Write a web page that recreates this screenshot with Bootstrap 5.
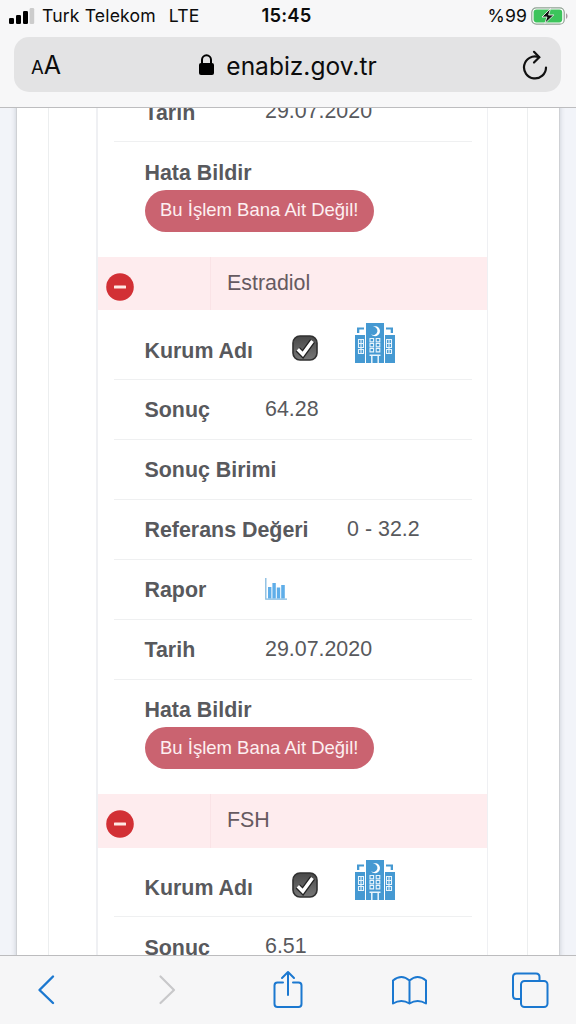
<!DOCTYPE html>
<html lang="tr">

<head>
    <meta charset="UTF-8">
    <meta name="viewport" content="width=device-width, initial-scale=1.0">
    <title>e-Nabız Tahliller</title>
    <link href="https://cdn.jsdelivr.net/npm/bootstrap@5.3.3/dist/css/bootstrap.min.css" rel="stylesheet">
    <style>
        body {
            font-family: "Liberation Sans", Arial, sans-serif;
            font-size: 21.4px;
            color: #58595d;
            background: #f2f4f9;
        }
        svg { display: block; flex: none; }

        /* browser bars */
        .top-bar {
            height: 108px;
            background: #f7f7f8;
            border-bottom: 1px solid #bdbdbf;
            font-family: Inter, Roboto, sans-serif;
            color: #0c0c0c;
        }
        .status-line {
            display: grid;
            grid-template-columns: 1fr auto 1fr;
            height: 37px;
            padding: 0 8px 5px 9px;
            font-size: 17.6px;
            letter-spacing: .15px;
        }
        .carrier { margin-left: 7px; }
        .network { margin-left: 13px; }
        .clock { padding-right: 4px; font-weight: 600; font-size: 18.4px; letter-spacing: .2px; }
        .address {
            height: 55px;
            margin: 0 15px 0 14px;
            padding: 0 13px 0 17px;
            border-radius: 15px;
            background: #e3e3e4;
            font-size: 24.5px;
        }
        .url-box { padding-right: 7px; }
        .text-size { font-size: 18.5px; line-height: 1; padding-top: 2px; }
        .text-size span { font-size: 25px; }
        .bottom-bar {
            height: 69px;
            background: #f6f6f7;
            border-top: 1px solid #bcbcbe;
            color: #1b78d0;
        }

        /* page frames */
        .sheet {
            margin: 0 16px;
            padding: 0 31px;
            background: #fff;
            border: solid #cfd1d5;
            border-width: 0 1px;
            box-shadow: 0 0 5px rgba(60, 70, 90, .22);
        }
        .panel-frame {
            padding: 0 39px 0 47px;
            border: solid #eceeef;
            border-width: 0 1px;
        }
        .results {
            margin-top: -26px;
            border: solid #eff0f3;
            border-width: 0 1px 0 2px;
        }

        /* lab result rows */
        .test-head { height: 53.5px; background: #feecee; color: #665a60; }
        .toggle-cell {
            width: 113px;
            padding: 16px 0 0 8px;
            border-right: 1px solid #fae3e6;
        }
        .test-name { padding: 10px 0 0 16px; }
        .detail {
            height: 60px;
            margin: 0 15px 0 16px;
            padding: 14.6px 0 0 30.5px;
            border-bottom: 1.5px solid #eff0f1;
            line-height: 32px;
        }
        .detail.first-row { height: 69.5px; padding-top: 24.5px; }
        .detail.last-row { height: 114.5px; border: 0; }
        .detail-label { min-width: 82px; margin-right: 38.5px; font-weight: 700; }
        .detail-value { margin-top: -1.4px; }
        .last-row .detail-label { line-height: 30px; padding-top: 1px; }
        .first-row .hospital { margin: -13px 0 0 36px; }
        .report-btn {
            height: 42px;
            width: 229.5px;
            padding: 0 0 1px;
            margin-top: 2px;
            border: 0;
            border-radius: 21px;
            background: #ca6370;
            color: #fdeff0;
            font-size: 18.5px;
            white-space: nowrap;
        }
    </style>
</head>

<body>
    <svg width="0" height="0" class="position-absolute">
        <symbol id="minus" viewBox="0 0 28 28">
            <circle cx="14" cy="14" r="13.8" fill="#d23035" />
            <rect x="8" y="12.5" width="12" height="3" rx=".6" fill="#ffe9e5" />
        </symbol>
        <symbol id="check" viewBox="0 0 26 26">
            <rect x="1" y="1" width="24" height="24" rx="7" fill="url(#dark)" stroke="#303030" stroke-width="1.6" />
            <path d="M5.8 14.3l5 5L20.5 6" fill="none" stroke="#222" stroke-width="6" />
            <path d="M5.8 14.3l5 5L20.5 6" fill="none" stroke="#fff" stroke-width="3.4" />
        </symbol>
        <linearGradient id="dark" x2="0" y2="1">
            <stop stop-color="#484848" />
            <stop offset="1" stop-color="#777" />
        </linearGradient>
        <symbol id="hospital" viewBox="0 0 42 42">
            <g fill="#4599d2">
                <path d="M12 1h18v40H12zM1 13h10v28H1zM31 13h10v28H31z" />
                <path d="M3 5.5h7v2H5.3V11H3zM32 5.5h7V11h-2.3V7.5H32z" />
            </g>
            <path d="M18.6 4.8A5 5 0 1 1 17 12.2a4.1 4.1 0 1 0 1.6-7.4z" fill="#fff" />
            <g fill="none" stroke="#e8f4fc" stroke-width="1.1">
                <path d="M16 16.5h3.6v3.4H16zM22.2 16.5h3.6v3.4h-3.6zM16 21.5h3.6v3.4H16zM22.2 21.5h3.6v3.4h-3.6zM16 26.5h3.6v3.4H16zM22.2 26.5h3.6v3.4h-3.6z" />
                <path d="M4.5 17.5h5v4h-5zM4.5 21.5h5v4h-5zM4.5 27.5h5v4h-5zM7 17.5v14M32.5 17.5h5v4h-5zM32.5 21.5h5v4h-5zM32.5 27.5h5v4h-5zM35 17.5v14" />
                <path d="M15.5 33.3h11M17.8 33.5V41M24.2 33.5V41" stroke-width="1.5" />
            </g>
        </symbol>
        <symbol id="chart" viewBox="0 0 22 22">
            <path d="M.8 0v21.2H22" fill="none" stroke="#83b9df" stroke-width="1.3" />
            <path d="M3 9h3.4v11.5H3zM7.4 5h3.4v15.5H7.4zM11.8 9.5h3.4v11H11.8zM16.2 7h3.6v13.5h-3.6z" fill="#5faee9" />
        </symbol>
    </svg>

    <div class="vh-100 d-flex flex-column overflow-hidden">
        <header class="top-bar flex-shrink-0">
            <div class="status-line align-items-center">
                <div class="d-flex align-items-center">
                    <svg width="26" height="16" viewBox="0 0 26 16">
                        <rect x="0" y="10" width="5" height="6" rx="1.3" />
                        <rect x="7" y="7" width="5" height="9" rx="1.3" />
                        <rect x="14" y="3" width="5" height="13" rx="1.3" />
                        <rect x="20.6" y="0" width="4.6" height="16" rx="1.3" fill="#ccc" />
                    </svg>
                    <span class="carrier">Turk Telekom</span>
                    <span class="network">LTE</span>
                </div>
                <div class="clock">15:45</div>
                <div class="d-flex align-items-center justify-content-end gap-1">
                    <span>%99</span>
                    <svg width="37" height="18" viewBox="0 0 37 18">
                        <rect x=".8" y=".8" width="32.4" height="16.4" rx="4.5" fill="#fff" stroke="#8fa193" stroke-width="1.2" />
                        <rect x="2.6" y="2.6" width="28.6" height="12.8" rx="2.8" fill="#3cc45b" />
                        <path d="M35 6.2c2 .8 2 4.8 0 5.6z" fill="#a99aa2" />
                        <path d="M19.5 1.5L11 10h5l-2.2 6.5L22.8 8h-5.2z" fill="#111" stroke="#fff" stroke-width=".8" />
                    </svg>
                </div>
            </div>
            <div class="address d-flex align-items-center justify-content-between">
                <div class="text-size">A<span>A</span></div>
                <div class="url-box d-flex align-items-center">
                    <svg width="15" height="21" viewBox="0 0 15 21" class="me-2">
                        <rect y="9" width="15" height="12" rx="2" />
                        <path d="M3 10V5.8a4.5 4.5 0 0 1 9 0V10" fill="none" stroke="#000" stroke-width="2" />
                    </svg>
                    <span class="ms-1 pt-1">enabiz.gov.tr</span>
                </div>
                <svg width="26" height="30" viewBox="0 0 26 30" fill="none" stroke="#111" stroke-width="2.2" stroke-linecap="round">
                    <path d="M16.5 7A11 11 0 1 0 24 17.5" />
                    <path d="M12 1.8L17.3 7.2 12 12.5" />
                </svg>
            </div>
        </header>

        <main class="flex-grow-1 overflow-hidden">
            <div class="sheet">
                <div class="panel-frame">
                    <div class="results">
                        <div class="detail d-flex">
                            <div class="detail-label">Tarih</div>
                            <div class="detail-value">29.07.2020</div>
                        </div>
                        <div class="detail last-row">
                            <div class="detail-label">Hata Bildir</div>
                            <button class="btn report-btn">Bu İşlem Bana Ait Değil!</button>
                        </div>

                        <div class="test-head d-flex">
                            <div class="toggle-cell"><svg width="28" height="28"><use href="#minus" /></svg></div>
                            <div class="test-name">Estradiol</div>
                        </div>
                        <div class="detail first-row d-flex">
                            <div class="detail-label">Kurum Adı</div>
                            <svg width="26" height="26"><use href="#check" /></svg>
                            <svg width="42" height="42" class="hospital"><use href="#hospital" /></svg>
                        </div>
                        <div class="detail d-flex">
                            <div class="detail-label">Sonuç</div>
                            <div class="detail-value">64.28</div>
                        </div>
                        <div class="detail d-flex">
                            <div class="detail-label">Sonuç Birimi</div>
                        </div>
                        <div class="detail d-flex">
                            <div class="detail-label">Referans Değeri</div>
                            <div class="detail-value">0 - 32.2</div>
                        </div>
                        <div class="detail d-flex">
                            <div class="detail-label">Rapor</div>
                            <svg width="22" height="22" class="mt-1"><use href="#chart" /></svg>
                        </div>
                        <div class="detail d-flex">
                            <div class="detail-label">Tarih</div>
                            <div class="detail-value">29.07.2020</div>
                        </div>
                        <div class="detail last-row">
                            <div class="detail-label">Hata Bildir</div>
                            <button class="btn report-btn">Bu İşlem Bana Ait Değil!</button>
                        </div>

                        <div class="test-head d-flex">
                            <div class="toggle-cell"><svg width="28" height="28"><use href="#minus" /></svg></div>
                            <div class="test-name">FSH</div>
                        </div>
                        <div class="detail first-row d-flex">
                            <div class="detail-label">Kurum Adı</div>
                            <svg width="26" height="26"><use href="#check" /></svg>
                            <svg width="42" height="42" class="hospital"><use href="#hospital" /></svg>
                        </div>
                        <div class="detail d-flex">
                            <div class="detail-label">Sonuç</div>
                            <div class="detail-value">6.51</div>
                        </div>
                    </div>
                </div>
            </div>
        </main>

        <footer class="bottom-bar flex-shrink-0 d-flex justify-content-between">
            <svg width="576" height="68" viewBox="0 956 576 68" fill="none" stroke="currentColor" stroke-width="2" stroke-linecap="round" stroke-linejoin="round">
                <path d="M53 976.5L39.5 990 53 1003" stroke-width="2.4" />
                <path d="M160.5 976.5L174 990l-13.5 13" stroke="#c8c8ca" stroke-width="2.2" />
                <path d="M283 982.5h-5.500q-3 0-3 3v18.500q0 3 3 3h21q3 0 3-3v-18.500q0-3-3-3H293M288 995v-22.500M282 978l6-6 6 6" />
                <path d="M409.500 980.500v23q-8-5-16.500 0v-23q8.500-7 16.500 0q8-7 16.500 0v23q-8.500-5-16.500 0" />
                <rect x="521" y="981" width="26.500" height="26" rx="3.500" />
                <path d="M520.500 999h-4q-3.500 0-3.500-3.500v-18.500q0-3.500 3.500-3.500h19.500q3.500 0 3.500 3.500v3.500" />
            </svg>
        </footer>
    </div>
    <script src="https://cdn.jsdelivr.net/npm/bootstrap@5.3.3/dist/js/bootstrap.bundle.min.js"></script>
</body>

</html>
